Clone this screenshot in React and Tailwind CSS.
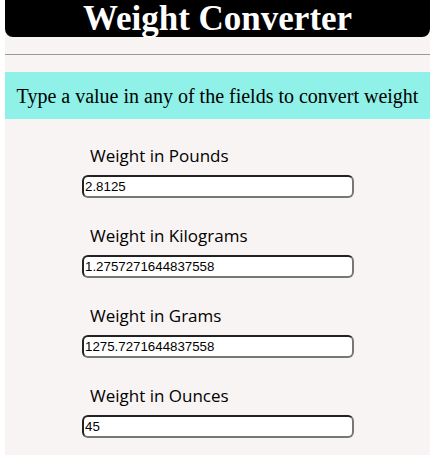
import { useState } from 'react';

const Field = ({ label, value, onChange }) => (
  <div className="flex flex-col">
    <label className="pl-2 h-[34px] pt-[3px] text-[17px] leading-[24px] text-black font-['Open_Sans',sans-serif]">
      {label}
    </label>
    <input
      type="text"
      value={value}
      onChange={(e) => onChange(e.target.value)}
      className="w-[272px] h-[23px] p-0 pl-px bg-white rounded-[6px] border-2 border-t-[#222] border-l-[#222] border-b-[#777] border-r-[#777] text-[13.3px] text-black font-['Liberation_Sans',Arial,sans-serif] outline-none"
    />
  </div>
);

export default function App() {
  const [oz, setOz] = useState('45');
  const n = parseFloat(oz) || 0;
  const pounds = n / 16;

  return (
    <div className="bg-white min-h-[465px] pl-[5px]">
      <div className="w-[425px] bg-[#f8f4f3] pb-[17px]">
        <h1 className="bg-black text-white rounded-b-[8px] h-[37px] flex items-center justify-center text-[35px] font-bold leading-none font-['Liberation_Serif','Times_New_Roman',serif]">
          Weight Converter
        </h1>
        <div className="h-[17px]" />
        <hr className="border-t border-[#999]" />
        <div className="h-[17px]" />
        <div className="bg-[#8ff1e7] h-[47px] flex items-center justify-center text-[20px] text-black font-['Liberation_Serif','Times_New_Roman',serif]">
          Type a value in any of the fields to convert weight
        </div>
        <div className="pl-[77px] pt-[22px] flex flex-col gap-[23px]">
          <Field label="Weight in Pounds" value={String(pounds)} onChange={(v) => setOz(String((parseFloat(v) || 0) * 16))} />
          <Field label="Weight in Kilograms" value="1.2757271644837558" onChange={() => {}} />
          <Field label="Weight in Grams" value="1275.7271644837558" onChange={() => {}} />
          <Field label="Weight in Ounces" value={oz} onChange={setOz} />
        </div>
      </div>
    </div>
  );
}
